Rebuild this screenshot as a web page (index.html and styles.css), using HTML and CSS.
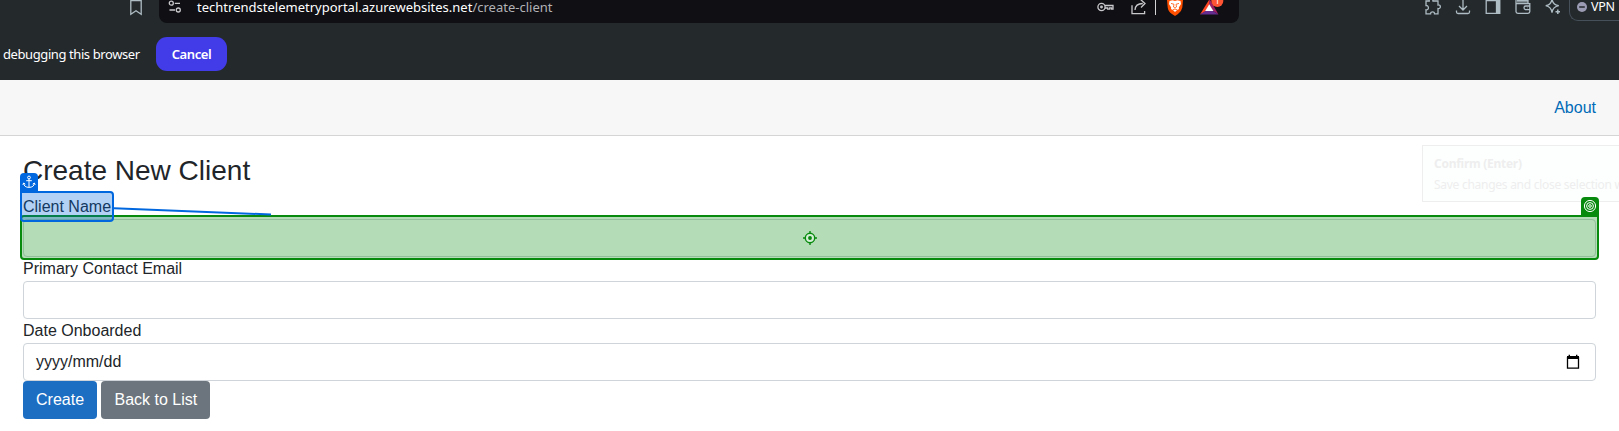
FILE: index.html
```html
<!DOCTYPE html>
<html lang="en">
<head>
<meta charset="utf-8">
<title>Create New Client</title>
<link rel="stylesheet" href="styles.css">
</head>
<body>
<div class="browser">
  <div class="toolbar">
    <svg class="bookmark" width="14" height="16" viewBox="0 0 14 16"><path d="M1.8 -1V14.2L7 10.8L12.2 14.2V-1M2 .6H12" /></svg>
    <div class="address">
      <svg class="tune" width="14" height="14" viewBox="0 0 14 14"><circle cx="3.3" cy="3.2" r="2"/><path d="M6.8 3.3H12M1.5 10H7"/><circle cx="10.3" cy="10" r="2"/></svg>
      <span class="url">techtrendstelemetryportal.azurewebsites.net<span class="path">/create-client</span></span>
      <div class="actions">
        <svg width="17" height="23" viewBox="0 0 17 23"><circle cx="4.5" cy="7" r="3.6"/><circle cx="4.5" cy="7" r=".8"/><path d="M8 5.5H16V9.2H14.5V7.8H12.7V9.2H10.7V8H8"/></svg>
        <svg class="share" width="18" height="23" viewBox="0 0 18 23"><path d="M2 5.2V13.7H14.6V11M5 10C5.2 5.8 8 3.6 12.8 3.5M10 -1L15 3.5L11 7.5"/></svg>
        <i class="divider"></i>
        <svg class="lion" width="18" height="23" viewBox="0 0 18 23"><path fill="#ff5000" stroke="none" d="M1 0H17L16.3 7.5Q15.6 11.6 12 14L9 16L6 14Q2.2 11.6 1.7 7.5Z"/><path fill="#fff" stroke="none" d="M3.5 1L6.5 .3L9 1L11.5 .3L14.5 1L15 4L12.8 7.6L13 9L10.6 10.6L9 12L7.4 10.6L5 9L5.2 7.6L3 4Z"/><path stroke="#ff5000" stroke-width=".8" d="M5 3.4L8 4.3L7.5 7L9 8L10.5 7L10 4.3L13 3.4M6.5 10L9 9L11.5 10"/></svg>
        <svg class="bat" width="24" height="23" viewBox="0 0 24 23"><path fill="#ff4724" stroke="none" d="M9.6 -1L0 14.5L6 11L10 4Z"/><path fill="#9e1f63" stroke="none" d="M9.6 -1L18.5 14.5L13 11L9 4Z"/><path fill="#662d91" stroke="none" d="M0 14.5L5.4 11H13L18.5 14.5Z"/><path fill="#fff" stroke="none" d="M9.3 4.2L13.4 11H5.2Z"/><circle cx="17.3" cy="1" r="6" fill="#ff5433" stroke="none"/><text x="14.8" y="4.4">1</text></svg>
      </div>
    </div>
    <div class="extensions">
      <svg width="16" height="16" viewBox="0 0 16 16"><path d="M1 1H4.2C3.7-1.5 8-2 8 1H13V5C16 4.4 16.3 9 13 8.6V13.8H9.5C9.6 11.2 5.6 11.2 5.6 13.8H1V9.8C4.2 10.4 4.2 5.2 1 5.5Z"/></svg>
      <svg width="16" height="16" viewBox="0 0 16 16"><path d="M8 -1V9.5M4 6L8 10L12 6M1.5 10.5V12Q1.5 13.5 3 13.5H13Q14.5 13.5 14.5 12V10.5"/></svg>
      <svg width="16" height="16" viewBox="0 0 16 16"><path d="M1.2 .7H14.5V13.3H1.2Z"/><path fill="#aebcc3" d="M11.5 .7H14.7V13.3H11.5Z"/></svg>
      <svg width="16" height="16" viewBox="0 0 16 16"><path d="M1 0V11.5Q1 13.3 2.8 13.3H13Q14.8 13.3 14.8 11.5V3.6H1M2 .5H13V3.5M15 6H10.8Q9 6 9 7.8T10.8 9.7H15M12 7.8h.4"/><path stroke-width="2" opacity=".6" d="M2 1.8H13"/></svg>
      <svg width="16" height="16" viewBox="0 0 16 16"><path d="M7-1.2Q7.8 5 13.8 5.7Q7.8 6.8 7 12.7Q6.2 6.8 .7 5.7Q6.2 5 7-1.2Z"/><path stroke-width="1.5" d="M12.8 9.5V14M10.5 11.8H15"/></svg>
    </div>
    <div class="vpn"><svg width="10" height="10" viewBox="0 0 10 10"><circle cx="5" cy="5" r="5" fill="#9c9bb4"/><path stroke="#24292c" stroke-width="1.5" d="M2.2 5H7.8"/></svg><span>VPN</span></div>
  </div>
  <div class="infobar"><span class="message">debugging this browser</span><button class="cancel">Cancel</button></div>
</div>
<header class="top-row"><a class="about">About</a></header>
<main class="content">
  <h3>Create New Client</h3>
  <label>Client Name</label>
  <div class="field"></div>
  <label>Primary Contact Email</label>
  <div class="field"></div>
  <label>Date Onboarded</label>
  <div class="field date"><span>yyyy/mm/dd</span>
    <svg width="14" height="16" viewBox="0 0 14 16"><path d="M1.5 3V14.2H12.5V3" fill="none" stroke="#000" stroke-width="1.3"/><path d="M1 2H13V5H1ZM2.6.8H4V3H2.6ZM10 .8H11.4V3H10Z"/></svg></div>
  <div class="buttons"><button class="btn primary">Create</button><button class="btn secondary">Back to List</button></div>
</main>
<aside class="hint"><strong>Confirm (Enter)</strong><span>Save changes and close selection w</span></aside>
<div class="target">
  <span class="tab target-tab"><svg width="14" height="14" viewBox="0 0 14 14"><circle cx="7" cy="7" r="5.6"/><circle cx="7" cy="7" r="3.4"/><circle cx="7" cy="7" r="1.3"/></svg></span>
  <svg class="crosshair" width="14" height="14" viewBox="0 0 14 14"><circle cx="7" cy="7" r="4.7" fill="#d5edd6"/><circle cx="7" cy="7" r="1.2" fill="#078a0e"/><path d="M7 0V2.5M7 11.5V14M0 7H2.5M11.5 7H14"/></svg>
</div>
<div class="anchor">
  <span class="tab anchor-tab"><svg width="14" height="14" viewBox="0 0 14 14"><circle cx="7" cy="2.5" r="1.4"/><path d="M7 4V12.2M4.2 5.7H9.8M1.6 8.2Q2 12.3 7 12.4Q12 12.3 12.4 8.2M.8 9.7L1.7 8L3.3 9.2M13.2 9.7L12.3 8L10.7 9.2"/></svg></span>
</div>
<svg class="connector" width="160" height="12" viewBox="0 0 160 12"><path d="M0 3.2L157 9.5"/></svg>
</body>
</html>
```
FILE: styles.css
```css
* { box-sizing: border-box; }
body { margin: 0; position: relative; height: 431px; overflow: hidden; background: #fff; color: #212529; font: 16px/24px "Liberation Sans", Arial, sans-serif; }
svg { display: block; flex: none; overflow: visible; }
button { font: inherit; border: 0; margin: 0; }

/* Browser chrome */
.browser { height: 80px; background: #24292c; overflow: hidden; color: #fff; font: 13px/18px "Noto Sans", "Open Sans", sans-serif; }
.toolbar { display: flex; align-items: flex-start; height: 37px; }
.toolbar svg { fill: none; stroke: #aebcc3; stroke-width: 1.3; }
.bookmark { margin-left: 129px; }
.address { display: flex; width: 1080px; height: 23px; margin-left: 16px; background: #0f0f14; border-radius: 0 0 8px 8px; }
.address svg { stroke: #c9c9cc; }
.tune { margin-left: 9px; }
.url { margin-top: -2px; margin-left: 15px; white-space: nowrap; letter-spacing: .005px; }
.path { color: #b2b2b5; }
.actions { display: flex; margin-left: auto; padding-right: 15px; }
.share { margin-left: 16px; }
.divider { width: 1px; height: 15px; margin-left: 7px; background: #d3d3d5; }
.lion { margin-left: 10px; }
.bat { margin-left: 16px; }
.bat text { fill: #fff; stroke: none; font-size: 9px; }
.extensions { display: flex; gap: 14px; margin-left: 186px; }
.vpn { display: flex; align-items: center; gap: 4px; width: 50px; height: 31px; margin: -10px 0 0 8px; padding: 2px 0 0 7px; border: 1px solid #46505a; border-right: 0; border-radius: 9px 0 0 9px; flex: none; font-size: 12.5px; letter-spacing: -.3px; }
.vpn svg { stroke: none; }
.infobar { display: flex; align-items: center; height: 34px; gap: 16px; padding-left: 3px; }
.message { width: 137px; white-space: nowrap; letter-spacing: -.41px; }
.cancel { width: 71px; height: 34px; padding: 0; border-radius: 11px; background: #423be8; color: #fff; font-weight: 600; letter-spacing: -.4px; }

/* Application page */
.top-row { display: flex; align-items: center; justify-content: flex-end; height: 56px; padding-right: 23px; background: #f7f7f7; border-bottom: 1px solid #d6d5d5; }
.about { color: #006bb7; }
.content { padding: 18px 23px 0; }
h3 { margin: 0 0 7px; font-size: 28px; line-height: 34px; font-weight: 400; }
label { display: block; height: 24px; }
.field { height: 38px; border: 1px solid #ced4da; border-radius: 4px; background: #fff; }
.date { display: flex; align-items: center; justify-content: space-between; padding: 0 15px 0 12px; }
.buttons { display: flex; gap: 4px; }
.btn { height: 38px; padding: 0 13px; border-radius: 4px; color: #fff; }
.primary { background: #1b6ec2; }
.secondary { padding: 0 12.5px 0 13.5px; background: #6c757d; }

/* Selection overlays */
.hint { position: absolute; left: 1422px; top: 145px; width: 197px; height: 57px; padding: 7px 0 0 11px; border: 1px solid #eee; border-right: 0; background: #fdfffe; color: #eee; font: 12px/21px "Noto Sans", sans-serif; letter-spacing: -.27px; white-space: nowrap; overflow: hidden; }
.hint strong, .hint span { display: block; }
.target { position: absolute; left: 20px; top: 215px; width: 1579px; height: 45px; border: 2px solid #078a0e; border-radius: 4px; border-top-right-radius: 0; background: rgba(7, 138, 14, .3); display: flex; align-items: center; justify-content: center; }
.crosshair { fill: none; stroke: #078a0e; stroke-width: 1.4; }
.anchor { position: absolute; left: 20px; top: 191px; width: 94px; height: 31px; border: 2px solid #0067df; border-radius: 0 4px 4px 4px; background: rgba(0, 103, 223, .3); }
.tab { position: absolute; width: 18px; height: 19px; padding: 2px; border-radius: 4px 4px 0 0; }
.tab svg { fill: none; stroke: #fff; stroke-width: 1; }
.anchor-tab { left: -2px; top: -20px; background: #0067df; }
.target-tab { right: -2px; top: -20px; background: #078a0e; }
.connector { position: absolute; left: 114px; top: 205px; fill: none; stroke: #0067df; stroke-width: 2; }
```
